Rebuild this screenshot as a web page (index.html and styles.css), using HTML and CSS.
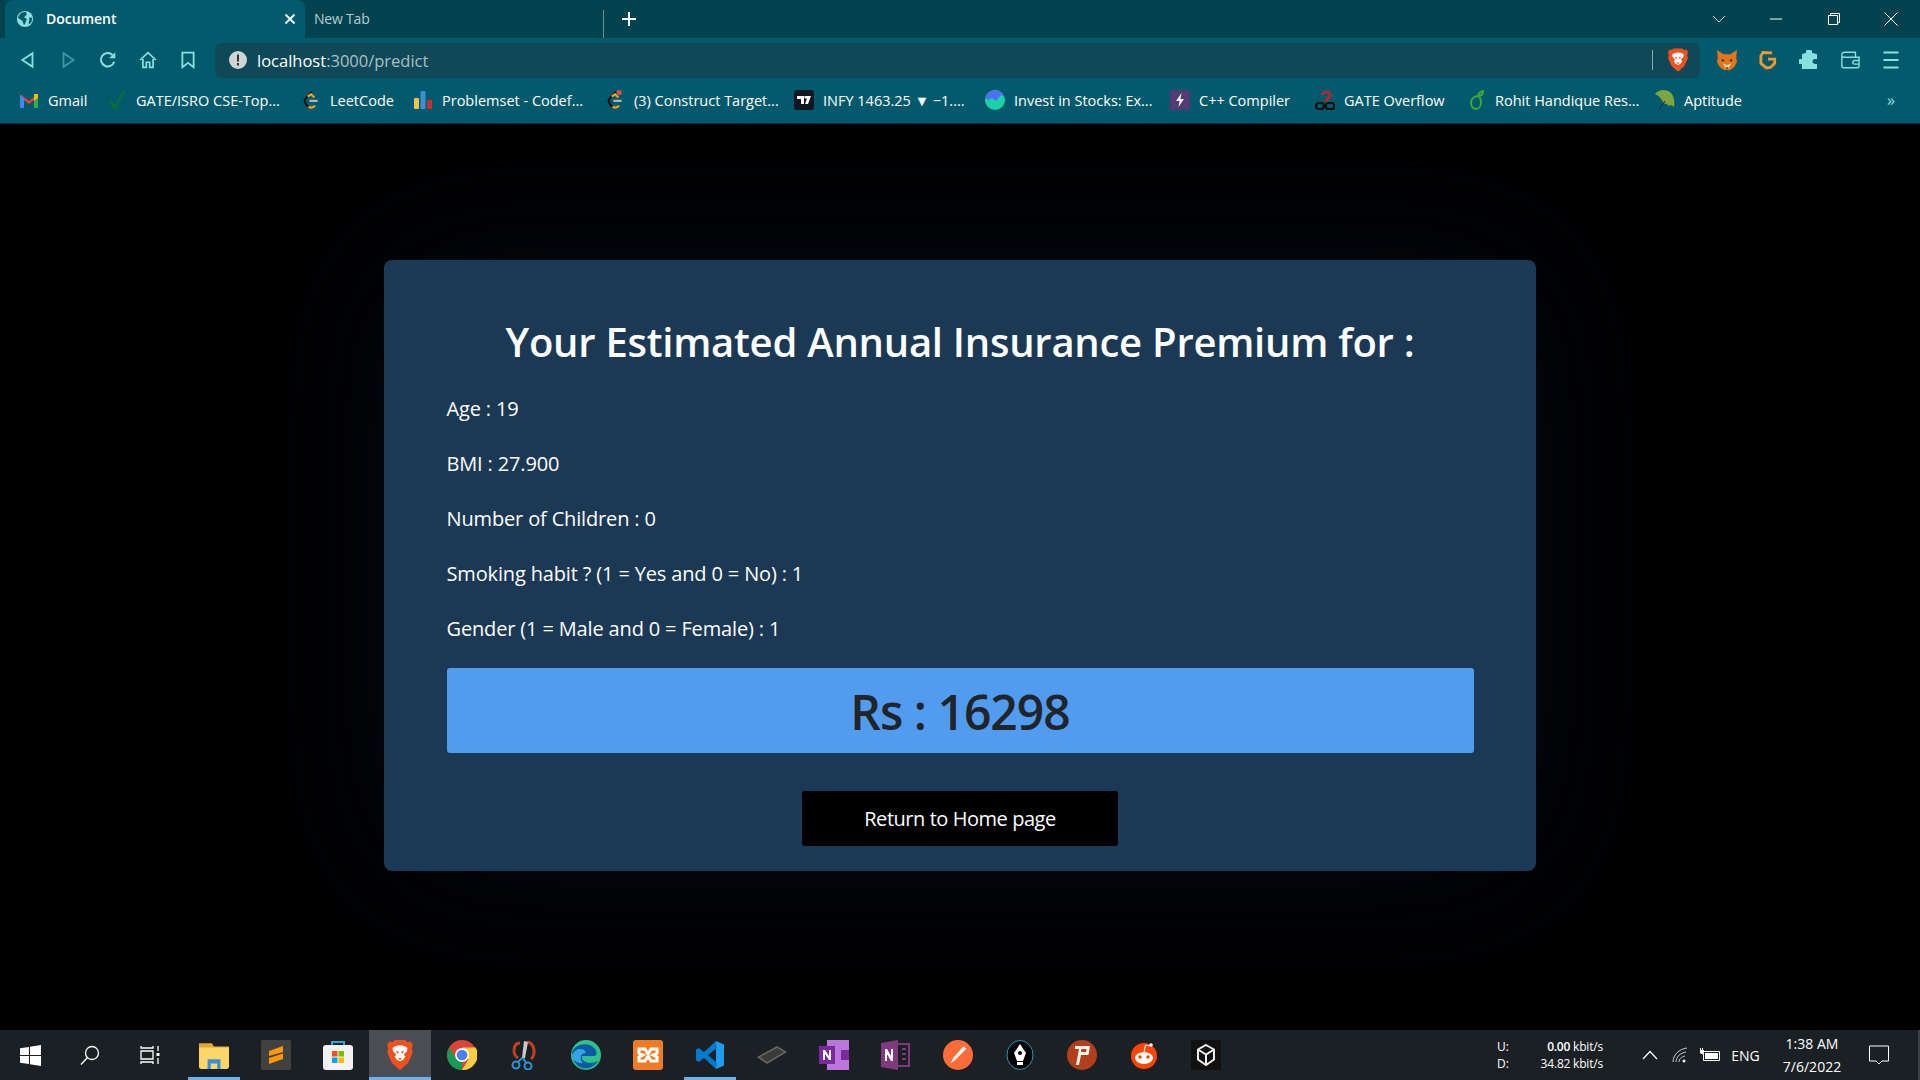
FILE: index.html
```html
<!DOCTYPE html>
<html lang="en">
<head>
    <meta charset="UTF-8">
    <title>Document</title>
    <link rel="stylesheet" href="styles.css">
</head>
<body>
    <svg class="defs" width="0" height="0">
        <symbol id="brave" viewBox="0 0 24 28">
            <path fill="#f1501f" d="M12 0l5 0 2 2 3-.5 2 3-1 4 1 3-4.500 10L12 28l-7.500-6.500L0 11.500l1-3-1-4 2-3 3 .5 2-2z"/>
            <path fill="#fff" d="M12 5l4 .5 3 2-.5 3-3 3 1.500 2-2 3L12 20l-3-1.500-2-3 1.500-2-3-3-.5-3 3-2z"/>
            <path fill="#f1501f" d="M8 10l3 1-1 2zM16 10l-3 1 1 2zM10 17h4l-2 2z"/>
        </symbol>
        <symbol id="leet" viewBox="0 0 20 24">
            <path fill="none" stroke="#111" stroke-width="2.500" d="M11 2L3 11c-2 3 1 7 4 9"/>
            <path fill="none" stroke="#f89f1b" stroke-width="2.500" d="M6 8l4-3 4 4M7 20c3 2 6 1 8-1"/>
            <path stroke="#b3b3b3" stroke-width="2.500" d="M8 13h10"/>
        </symbol>
    </svg>

    <!-- Browser top -->
    <header class="browser">
        <div class="tabstrip">
            <div class="tab active">
                <svg class="tab-icon" viewBox="0 0 20 20"><circle cx="10" cy="10" r="9" fill="#8ae0df"/><path fill="#035a6d" d="M6 3l5-1 1 3-3 3 3 2-1 3-2 4-2-5-3-2-2-1 2-4zM15 8l3 1-1 5-3 2z"/></svg>
                <span class="tab-title">Document</span>
                <svg class="tab-close" viewBox="0 0 12 12"><path stroke="#fff" stroke-width="1.800" d="M1.500 1.500l9 9M10.500 1.500l-9 9"/></svg>
            </div>
            <div class="tab idle"><span class="tab-title">New Tab</span></div>
            <svg class="new-tab" viewBox="0 0 16 16"><path stroke="#fff" stroke-width="2" d="M8 1v14M1 8h14"/></svg>
            <div class="window-controls">
                <button class="win-btn"><svg viewBox="0 0 14 14" width="14" height="14"><path fill="none" stroke="#b9d3d8" d="M1 4l6 6 6-6"/></svg></button>
                <button class="win-btn"><svg viewBox="0 0 14 14" width="14" height="14"><path stroke="#fff" d="M1 7h12"/></svg></button>
                <button class="win-btn"><svg viewBox="0 0 14 14" width="14" height="14"><path fill="none" stroke="#fff" d="M1.500 3.500h9v9h-9zM3.500 3.500v-2h9v9h-2"/></svg></button>
                <button class="win-btn"><svg viewBox="0 0 14 14" width="14" height="14"><path stroke="#fff" d="M.5.500l13 13M13.500.500l-13 13"/></svg></button>
            </div>
        </div>

        <div class="toolbar">
            <div class="nav-btn"><svg viewBox="0 0 16 16"><path fill="none" stroke="#8ae0df" stroke-width="1.600" d="M12 2v12L3 8z"/></svg></div>
            <div class="nav-btn faded"><svg viewBox="0 0 16 16"><path fill="none" stroke="#8ae0df" stroke-width="1.600" d="M4 2v12l9-6z"/></svg></div>
            <div class="nav-btn"><svg viewBox="0 0 16 16"><path fill="none" stroke="#8ae0df" stroke-width="1.800" d="M13.500 9.500A6 6 0 1 1 12 3.500"/><path fill="#8ae0df" d="M14.500 1v5.500H9z"/></svg></div>
            <div class="nav-btn"><svg viewBox="0 0 16 16"><path fill="none" stroke="#8ae0df" stroke-width="1.500" d="M1 8l7-6.500L15 8M3.500 7v7.500h3V10h3v4.500h3V7"/></svg></div>
            <div class="nav-btn"><svg viewBox="0 0 16 16"><path fill="none" stroke="#8ae0df" stroke-width="1.600" d="M3 1.500h10v13l-5-4-5 4z"/></svg></div>

            <div class="address">
                <svg class="addr-info" viewBox="0 0 18 18"><circle cx="9" cy="9" r="9" fill="#cfd4d6"/><path fill="#333" d="M8 3.500h2v7H8zM8 12h2v2.500H8z"/></svg>
                <span class="addr-host">localhost</span><span class="addr-path">:3000/predict</span>
                <span class="addr-sep"></span>
                <svg class="addr-brave" viewBox="0 0 24 28"><use href="#brave"/></svg>
            </div>

            <div class="extensions">
                <div class="ext-btn"><svg viewBox="0 0 24 24"><path fill="#e2761b" d="M0 0l8 5h8l8-5-1 9 1 5-3 6-5 4h-8l-5-4-3-6 1-5z"/><path fill="#f6c9a0" d="M7 16l5 2 5-2-3 6h-4z"/><path fill="#222" d="M5 11l4 1-2 2zM19 11l-4 1 2 2zM10.500 21h3L12 23z"/></svg></div>
                <div class="ext-btn"><svg viewBox="0 0 24 24"><path fill="none" stroke="#f3982a" stroke-width="3.400" d="M17 3.500L6 3 3.500 7v9L10 21.500l5-.5 5-5V11h-8"/></svg></div>
                <div class="ext-btn"><svg viewBox="0 0 20 20"><path fill="#8ae0df" d="M7 2a3 3 0 0 1 6 0v1l5 1v5h-2a2.500 2.500 0 0 0 0 5h2v5H3v-5H1.500a2.500 2.500 0 0 1 0-5H3V4l4-1z"/></svg></div>
                <div class="ext-btn"><svg viewBox="0 0 22 20"><path fill="none" stroke="#8ae0df" stroke-width="1.500" d="M2 5v11.500a2 2 0 0 0 2 2h15a2 2 0 0 0 2-2V7H4a2 2 0 0 1-2-2 3 3 0 0 1 3-3.500h12V7"/><path fill="none" stroke="#8ae0df" stroke-width="1.500" d="M21 10.500h-5a2 2 0 0 0 0 4h5"/></svg></div>
                <div class="ext-btn"><svg viewBox="0 0 16 16"><path stroke="#8ae0df" stroke-width="1.600" d="M2 2h12M2 8h12M2 14h12"/></svg></div>
            </div>
        </div>

        <div class="bookmarks">
            <div class="bm"><svg viewBox="0 0 20 20"><path fill="#ea4335" d="M1 4l9 7 9-7v3l-9 7-9-7z"/><path fill="#4285f4" d="M1 5v13h4V8z"/><path fill="#34a853" d="M19 5v13h-4V8z"/><path fill="#fbbc04" d="M15 4h4v4l-4 3z"/></svg><span>Gmail</span></div>
            <div class="bm"><svg viewBox="0 0 20 20"><path fill="#0e6b39" d="M2 11l3-1 3 5 8-14h2L9 20H7z"/></svg><span>GATE/ISRO CSE-Top...</span></div>
            <div class="bm"><svg viewBox="0 0 20 24"><use href="#leet"/></svg><span>LeetCode</span></div>
            <div class="bm"><svg viewBox="0 0 20 20"><rect x="1" y="8" width="5" height="11" rx="1" fill="#f6c344"/><rect x="7.500" y="1" width="5" height="18" rx="1" fill="#3b8fd8"/><rect x="14" y="10" width="5" height="9" rx="1" fill="#c62f2f"/></svg><span>Problemset - Codef...</span></div>
            <div class="bm"><svg viewBox="0 0 20 24"><use href="#leet"/><circle cx="15" cy="3" r="3" fill="#e0533d"/></svg><span>(3) Construct Target...</span></div>
            <div class="bm"><svg viewBox="0 0 20 20"><rect width="20" height="20" rx="3" fill="#131722"/><path fill="#fff" d="M3 6h7v8H7V9H3zM10.500 6H17l-3 8h-3l2-5.500h-2.500z"/></svg><span>INFY 1463.25 ▼ −1....</span></div>
            <div class="bm"><svg viewBox="0 0 20 20"><circle cx="10" cy="10" r="10" fill="#1cd3a6"/><path fill="#4f6ef7" d="M.5 8A10 10 0 0 1 19.500 7L16 5l-5 6-4-3-4 2z"/></svg><span>Invest in Stocks: Ex...</span></div>
            <div class="bm"><svg viewBox="0 0 20 20"><rect width="20" height="20" fill="#523c73"/><path fill="#eee" d="M11.500 3L6 11h3.500l-1 6L14 9h-3.500z"/></svg><span>C++ Compiler</span></div>
            <div class="bm"><svg viewBox="0 0 20 20"><path fill="none" stroke="#c3202b" stroke-width="2.500" d="M7 5c1-4 8-4 8 0 0 3-4 3-4 7"/><rect x="1" y="13" width="8" height="6" rx="3" fill="none" stroke="#111" stroke-width="2"/><rect x="11" y="13" width="8" height="6" rx="2" fill="none" stroke="#111" stroke-width="2"/></svg><span>GATE Overflow</span></div>
            <div class="bm"><svg viewBox="0 0 20 20"><path fill="none" stroke="#43a534" stroke-width="2" d="M13 6c-5 0-8 3-8 7 0 3 2 6 5 6s5-3 5-7c0-2-1-4-2-6zM12 6c0-2 2-4 5-5 0 3-2 5-5 5z"/></svg><span>Rohit Handique Res...</span></div>
            <div class="bm"><svg viewBox="0 0 20 20"><path fill="#7da63f" d="M0 4C4-1 12-1 16 3c3 3 4 9 3 14-2-2-4-2-5.500-1-1-2-3-3-5-2C8 11 5 6 0 4z"/><path stroke="#223" d="M10 11l-6 8"/></svg><span>Aptitude</span></div>
            <div class="bm-more">»</div>
        </div>
    </header>

    <!-- Page -->
    <main class="page">
        <div class="card">
            <h1>Your Estimated Annual Insurance Premium for :</h1>
            <p>Age : 19</p>
            <p>BMI : 27.900</p>
            <p>Number of Children : 0</p>
            <p>Smoking habit ? (1 = Yes and 0 = No) : 1</p>
            <p>Gender (1 = Male and 0 = Female) : 1</p>
            <div class="result">Rs : 16298</div>
            <a class="home-btn" href="#">Return to Home page</a>
        </div>
    </main>

    <!-- Windows taskbar -->
    <footer class="taskbar">
        <div class="task-sys"><svg viewBox="0 0 20 20" width="21" height="21"><path fill="#fff" d="M0 3l8.500-1.200v7.700H0zM9.500 1.600L20 0v9.500H9.500zM0 10.500h8.500v7.700L0 17zM9.500 10.500H20V20L9.500 18.400z"/></svg></div>
        <div class="task-sys"><svg viewBox="0 0 20 20" width="20" height="20"><circle cx="12" cy="8" r="6.500" fill="none" stroke="#fff" stroke-width="1.300"/><path stroke="#fff" stroke-width="1.300" d="M7.500 12.500L1 19.500"/></svg></div>
        <div class="task-sys"><svg viewBox="0 0 20 20" width="20" height="20"><path fill="none" stroke="#fff" stroke-width="1.300" d="M1 1v2h12V1M1 6h12v8H1zM1 19v-2h12v2M18 1v5M18 13v6"/><rect x="16.500" y="8" width="3" height="3" fill="#fff"/></svg></div>
        <div class="task-gap"></div>
        <div class="task-app run"><svg viewBox="0 0 28 26"><path fill="#e0a92e" d="M0 2h12l2 3h14v4H0z"/><path fill="#fcd667" d="M0 6h28v18a2 2 0 0 1-2 2H2a2 2 0 0 1-2-2z"/><path fill="#3a8fd8" d="M8 26v-9h12v9h-3v-5h-6v5z"/></svg></div>
        <div class="task-app"><svg viewBox="0 0 30 30"><rect width="30" height="30" rx="2" fill="#414141"/><path fill="#ff9800" d="M22 6v6L8 16v-5zM8 24v-6l14-4.500V19z"/></svg></div>
        <div class="task-app"><svg viewBox="0 0 30 30"><path fill="none" stroke="#26a9e0" stroke-width="2" d="M9 6V2h12v4"/><rect y="5" width="30" height="25" rx="3" fill="#f2f2f2"/><path fill="#f25022" d="M9 11h5.500v5.500H9z"/><path fill="#7fba00" d="M15.500 11H21v5.500h-5.500z"/><path fill="#00a4ef" d="M9 17.500h5.500V23H9z"/><path fill="#ffb900" d="M15.500 17.500H21V23h-5.500z"/></svg></div>
        <div class="task-app active run"><svg viewBox="0 0 24 28"><use href="#brave"/></svg></div>
        <div class="task-app"><svg viewBox="0 0 28 28"><circle cx="14" cy="14" r="14" fill="#db4437"/><path fill="#0f9d58" d="M14 28A14 14 0 0 1 2 7l7 12 5 2z"/><path fill="#ffcd40" d="M14 7h12.700A14 14 0 0 1 14 28l6-10z"/><circle cx="14" cy="14" r="6.500" fill="#fff"/><circle cx="14" cy="14" r="5" fill="#4a80f0"/></svg></div>
        <div class="task-app"><svg viewBox="0 0 28 30"><path fill="none" stroke="#c3401f" stroke-width="3" d="M10 3C3 3 2 14 8 18M17 2c8 1 9 13 4 17"/><path fill="#c9c9c9" d="M14 1l4 1-3 16h-3z"/><circle cx="6" cy="25" r="3.500" fill="none" stroke="#2a93d5" stroke-width="2"/><circle cx="18" cy="26" r="3.500" fill="none" stroke="#2a93d5" stroke-width="2"/><path stroke="#2a93d5" stroke-width="2" d="M8 22l4-4M16 23l-3-5"/></svg></div>
        <div class="task-app"><svg viewBox="0 0 30 30"><circle cx="15" cy="15" r="15" fill="#2fc18c"/><path fill="#0c59a4" d="M1 13C3 4 18 1 24 9c2 3 2 6 0 7H11c-1 6 8 9 16 5-5 10-24 12-26-8z"/><path fill="#37a3e2" d="M1 15C5 7 14 8 15 13c-6 0-7 6-3 10C7 24 2 21 1 15z"/></svg></div>
        <div class="task-app"><svg viewBox="0 0 30 30"><rect width="30" height="30" rx="3" fill="#f07b23"/><path fill="none" stroke="#fff" stroke-width="3" d="M6 9h6l3 5 3-5h6v4l-4 2 4 2v4h-6l-3-5-3 5H6v-4l4-2-4-2z"/></svg></div>
        <div class="task-app run"><svg viewBox="0 0 30 30"><path fill="#1f9cf0" d="M21 1l8 3.500v21L21 29z"/><path fill="#007acc" d="M21 1L9 12 4 8 1 9.500v11L4 22l5-4 12 11 1-6-9-8 9-7z"/></svg></div>
        <div class="task-app"><svg viewBox="0 0 30 18"><path fill="#666" d="M0 11L20 0l10 6-20 12z"/><path fill="#3a3a3a" d="M3 11l17-9 7 4-17 10z"/></svg></div>
        <div class="task-app"><svg viewBox="0 0 30 30"><path fill="#ba77d9" d="M8 0h22v30H8z"/><path fill="#7b2a9e" d="M22 10h8v10h-8zM0 6h16v18H0z"/><path fill="#fff" d="M4 10h2l4 6v-6h2v10h-2l-4-6v6H4z"/></svg></div>
        <div class="task-app"><svg viewBox="0 0 30 30"><path fill="#80397b" d="M0 3l17-3v30L0 27z"/><path fill="#fff" d="M4 9h2l4 7V9h2v12h-2l-4-7v7H4z"/><path fill="none" stroke="#80397b" stroke-width="2" d="M17 4h11v22H17M21 9h4M21 14h4M21 19h4"/></svg></div>
        <div class="task-app"><svg viewBox="0 0 28 28"><circle cx="14" cy="14" r="14" fill="#ff6c37"/><path fill="#fff" d="M19 6l3 2-10 10-5 4 3-6z"/></svg></div>
        <div class="task-app"><svg viewBox="0 0 28 30"><ellipse cx="14" cy="15" rx="13" ry="14.500" fill="#000" stroke="#2d97b8"/><path fill="#fff" d="M14 4l6 9-3 8h-6l-3-8zM11 22h6v3h-6z"/><circle cx="14" cy="13" r="2" fill="#000"/></svg></div>
        <div class="task-app"><svg viewBox="0 0 30 30"><circle cx="15" cy="15" r="15" fill="#b13f1e"/><path fill="#f6f0e9" d="M8 6h15l-1.500 9H14l-2 10H9l3-16H8zM14.500 9L14 12h5l.500-3z"/></svg></div>
        <div class="task-app"><svg viewBox="0 0 28 30"><circle cx="14" cy="16" r="13" fill="#ff4500"/><ellipse cx="14" cy="18" rx="9" ry="6" fill="#fff"/><circle cx="10" cy="17" r="1.800" fill="#ff4500"/><circle cx="18" cy="17" r="1.800" fill="#ff4500"/><path fill="none" stroke="#fff" d="M14 12l1.500-7 4 1"/><circle cx="21" cy="5" r="1.800" fill="#fff"/></svg></div>
        <div class="task-app"><svg viewBox="0 0 30 30"><rect width="30" height="30" fill="#111"/><path fill="none" stroke="#eee" stroke-width="2" d="M15 5l8 4.500v10L15 25l-8-5.500v-10zM7 9.500l8 5 8-5M15 14.500V25"/></svg></div>

        <div class="tray">
            <div class="net">
                <span>U:</span><span class="net-val"><b>0.00</b> kbit/s</span>
                <span>D:</span><span class="net-val">34.82 kbit/s</span>
            </div>
            <div class="tray-item tray-first"><svg viewBox="0 0 16 10" width="16" height="10"><path fill="none" stroke="#fff" stroke-width="1.200" d="M1 9l7-7.500L15 9"/></svg></div>
            <div class="tray-item"><svg viewBox="0 0 16 16" width="16" height="16"><path fill="none" stroke="#ccc" d="M1 15C1 8 7 2 15 1M4 15c0-5 4-9 10-10M7 15c0-3 2-5 6-6"/><circle cx="12" cy="14" r="1.500" fill="#fff"/></svg></div>
            <div class="tray-item"><svg viewBox="0 0 20 14" width="20" height="14"><path fill="none" stroke="#fff" d="M3.500 3.500h16v9h-16z"/><path fill="#fff" d="M5 5h13v6H5zM0 0h1v2h1V0h1v2h1v3L2.500 6.500 0 5z"/></svg></div>
            <div class="tray-lang">ENG</div>
            <div class="clock"><span>1:38 AM</span><span>7/6/2022</span></div>
            <div class="tray-note"><svg viewBox="0 0 20 20" width="20" height="20"><path fill="none" stroke="#fff" d="M.5 1h19v15H13l-3 3-3-3H.5z"/></svg></div>
        </div>
    </footer>
</body>
</html>
```

FILE: styles.css
```css
* {
    margin: 0;
    padding: 0;
    box-sizing: border-box;
}

body {
    width: 1920px;
    height: 1080px;
    display: flex;
    flex-direction: column;
    overflow: hidden;
    background: #000;
    color: #fff;
    font-family: 'Open Sans', 'Noto Sans', sans-serif;
}

.defs {
    position: absolute;
}

svg {
    display: block;
    flex-shrink: 0;
}

/* Tabs */
.tabstrip {
    height: 38px;
    display: flex;
    align-items: flex-end;
    padding-left: 5px;
    background: #03424f;
}

.tab {
    height: 38px;
    display: flex;
    align-items: center;
    font-size: 14px;
}

.tab.active {
    width: 300px;
    padding-left: 11px;
    padding-bottom: 1px;
    background: #045a6d;
    border-radius: 8px 8px 0 0;
    font-weight: 600;
}

.tab.idle {
    width: 299px;
    height: 28px;
    margin-bottom: 0;
    padding: 0 0 11px 9px;
    color: #b5cdd2;
    border-right: 1px solid #6b8f97;
    letter-spacing: -0.2px;
}

.tab-icon {
    width: 18px;
    height: 18px;
    margin-right: 12px;
}

.tab-close {
    width: 12px;
    height: 12px;
    margin-left: auto;
    margin-right: 9px;
}

.new-tab {
    width: 16px;
    height: 16px;
    margin: 0 0 11px 17px;
}

.window-controls {
    display: flex;
    height: 38px;
    margin-left: auto;
}

.win-btn {
    width: 57.5px;
    display: flex;
    align-items: center;
    justify-content: center;
    background: none;
    border: none;
}

/* Toolbar */
.toolbar {
    height: 44px;
    display: flex;
    align-items: center;
    padding-left: 8px;
    background: #045a6d;
}

.nav-btn {
    width: 40px;
    display: flex;
    justify-content: center;
}

.nav-btn svg {
    width: 18px;
    height: 18px;
}

.nav-btn.faded {
    opacity: 0.45;
}

.address {
    width: 1485px;
    height: 35px;
    margin-left: 7px;
    display: flex;
    align-items: center;
    padding-left: 14px;
    background: #0f4856;
    border-radius: 6px;
    font-size: 16.5px;
}

.addr-info {
    width: 18px;
    height: 18px;
    margin-right: 10px;
}

.addr-host {
    color: #fff;
}

.addr-path {
    color: #a9c0c6;
}

.addr-sep {
    width: 1px;
    height: 20px;
    margin-left: auto;
    background: #8fa9af;
}

.addr-brave {
    width: 20px;
    height: 24px;
    margin: 0 12px 0 15px;
}

.extensions {
    display: flex;
    margin-left: 6px;
}

.ext-btn {
    width: 41px;
    display: flex;
    justify-content: center;
}

.ext-btn svg {
    width: 20px;
    height: 20px;
}

/* Bookmarks */
.bookmarks {
    height: 42px;
    display: grid;
    grid-template-columns: 88px 194px 112px 192px 189px 191px 185px 145px 151px 189px 232px 1fr;
    align-items: center;
    padding: 0 0 5px 19px;
    background: #045a6d;
    border-bottom: 1px solid #0a3039;
    font-size: 14.5px;
}

.bm {
    display: flex;
    align-items: center;
    white-space: nowrap;
}

.bm svg {
    width: 20px;
    height: 20px;
    margin-right: 9px;
}

.bm-more {
    color: #8ae0df;
    font-size: 16px;
}

/* Result card */
.page {
    flex: 1;
    padding-top: 136px;
    background: #000;
}

.card {
    width: 1152px;
    height: 611px;
    margin: 0 auto;
    padding: 0 62.5px;
    background: #1b3955;
    border-radius: 8px;
    box-shadow: 0 0 160px rgba(30, 40, 90, 0.22);
}

.card h1 {
    padding-top: 54px;
    margin-bottom: 23px;
    text-align: center;
    font-size: 40px;
    line-height: 55px;
    font-weight: 600;
    letter-spacing: -0.25px;
}

.card p {
    height: 55px;
    font-size: 20px;
    line-height: 30px;
    padding-top: 2px;
    letter-spacing: -0.15px;
}

.result {
    height: 85px;
    margin-top: 1px;
    display: flex;
    align-items: center;
    justify-content: center;
    padding-top: 2px;
    background: #519cef;
    border-radius: 3px;
    color: #212529;
    font-size: 48px;
    font-weight: 600;
    letter-spacing: -1px;
}

.home-btn {
    width: 316px;
    height: 55px;
    margin: 38px auto 0;
    display: flex;
    align-items: center;
    justify-content: center;
    background: #000;
    border-radius: 3px;
    color: #fff;
    font-size: 20px;
    letter-spacing: -0.45px;
    text-decoration: none;
}

/* Taskbar */
.taskbar {
    height: 50px;
    display: flex;
    background: #1b2024;
}

.task-sys {
    width: 60px;
    display: flex;
    align-items: center;
    justify-content: center;
}

.task-gap {
    width: 3px;
}

.task-app {
    position: relative;
    width: 62px;
    display: flex;
    align-items: center;
    justify-content: center;
}

.task-app svg {
    width: 30px;
    height: 30px;
}

.task-app.active {
    background: #4a4e52;
}

.task-app.run::after {
    content: '';
    position: absolute;
    left: 5px;
    right: 5px;
    bottom: 0;
    height: 3px;
    background: #6cb2eb;
}

.task-app.active.run::after {
    left: 0;
    right: 0;
}

.tray {
    display: flex;
    align-items: center;
    margin-left: auto;
    padding-right: 19px;
    border-right: 2px solid #3d4145;
    font-size: 12px;
}

.net {
    width: 106px;
    display: grid;
    grid-template-columns: 1fr auto;
    row-gap: 1px;
    line-height: 16px;
}

.net-val {
    text-align: right;
    letter-spacing: -0.2px;
}

.net-val b {
    font-weight: 600;
}

.tray-item {
    width: 30px;
    display: flex;
    justify-content: center;
}

.tray-first {
    margin-left: 32px;
}

.tray-lang {
    width: 41px;
    text-align: center;
    font-size: 14px;
}

.clock {
    width: 92px;
    display: flex;
    flex-direction: column;
    align-items: center;
    gap: 3px;
    font-size: 14px;
    line-height: 20px;
}

.tray-note {
    width: 41px;
    display: flex;
    justify-content: center;
}
```
